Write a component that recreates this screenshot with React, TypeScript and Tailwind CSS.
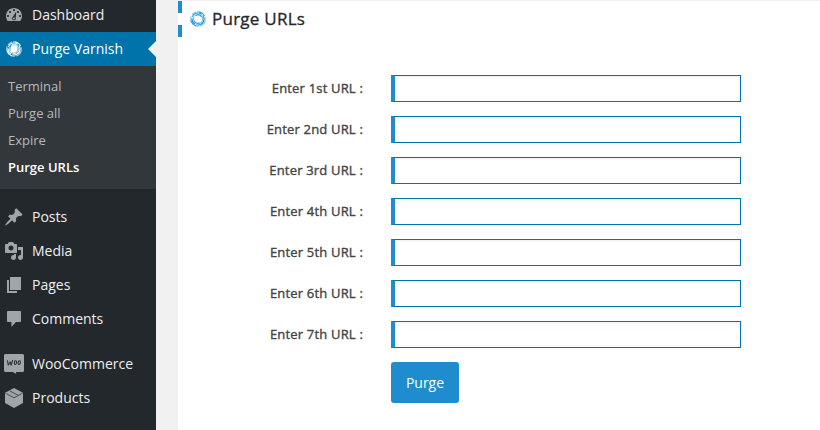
import type { ReactNode } from "react";

function Dash({ d }: { d: string }) {
  return (
    <svg viewBox="0 0 20 20" className="size-5 shrink-0 fill-[#a0a5aa]">
      <path fillRule="evenodd" d={d} />
    </svg>
  );
}

function Swirl({ className, light }: { className: string; light?: boolean }) {
  const main = light ? "#ffffff" : "#2196d6";
  const soft = light ? "#a5d3ee" : "#7cc8ee";
  return (
    <svg viewBox="0 0 16 16" className={className} fill="none">
      <circle cx="8" cy="8" r="7.3" stroke={soft} strokeWidth="1.1" strokeDasharray="9 1.6 5 1" />
      <circle cx="8" cy="8" r="6" stroke={main} strokeWidth="1.2" strokeDasharray="11 1.2 7 1.4" />
      <circle cx="8" cy="8" r="4.7" stroke={soft} strokeWidth="1.2" strokeDasharray="8 1" />
      {light && <circle cx="8" cy="8" r="3.7" fill="#ffffff" />}
      <path d="M4.2 9.6A4.2 4.2 0 0 0 9.6 11.9M5.6 4.6A4.2 4.2 0 0 1 11.9 6.5" stroke={main} strokeWidth="1" />
      <path d="M0.9 9.4A7.2 7.2 0 0 0 6 14.9M9 .9A7.2 7.2 0 0 1 14.6 5.2" stroke={main} strokeWidth="0.9" />
    </svg>
  );
}

const paths = {
  dashboard:
    "M3.76 16h12.48c1.1-1.37 1.76-3.11 1.76-5 0-4.42-3.58-8-8-8s-8 3.58-8 8c0 1.89.66 3.63 1.76 5zM10 4c.55 0 1 .45 1 1s-.45 1-1 1-1-.45-1-1 .45-1 1-1zM6 6c.55 0 1 .45 1 1s-.45 1-1 1-1-.45-1-1 .45-1 1-1zm8 0c.55 0 1 .45 1 1s-.45 1-1 1-1-.45-1-1 .45-1 1-1zM8.7 12L12.3 6.4 11.6 12.6c.2.3.3.6.3.9 0 1-.8 1.8-1.9 1.8s-1.9-.8-1.9-1.8c0-.6.2-1.1.6-1.5zM4 10c.55 0 1 .45 1 1s-.45 1-1 1-1-.45-1-1 .45-1 1-1zm12 0c.55 0 1 .45 1 1s-.45 1-1 1-1-.45-1-1 .45-1 1-1zm-5 3.5c0-.55-.45-1-1-1s-1 .45-1 1 .45 1 1 1 1-.45 1-1z",
  posts:
    "M10.44 3.02l1.82-1.82 6.36 6.35-1.83 1.82c-1.05-.68-2.48-.57-3.41.36l-.75.75c-.92.93-1.04 2.35-.35 3.41l-1.83 1.82-2.41-2.41-2.8 2.79c-.42.42-3.38 2.71-3.8 2.29s1.86-3.39 2.28-3.81l2.79-2.79L4.1 9.36l1.83-1.82c1.05.69 2.48.57 3.4-.36l.75-.75c.93-.92 1.05-2.35.36-3.41z",
  media:
    "M13 11V4c0-.55-.45-1-1-1h-1.67L9 1H5L3.67 3H2c-.55 0-1 .45-1 1v7c0 .55.45 1 1 1h10c.55 0 1-.45 1-1zM7 4.5c1.38 0 2.5 1.12 2.5 2.5S8.38 9.5 7 9.5 4.5 8.38 4.5 7 5.62 4.5 7 4.5zM14 6h5v10.5c0 1.38-1.12 2.5-2.5 2.5S14 17.88 14 16.5s1.12-2.5 2.5-2.5c.17 0 .34.02.5.05V9h-3V6zm-4 8.05V13h2v3.5c0 1.38-1.12 2.5-2.5 2.5S7 17.88 7 16.5 8.12 14 9.5 14c.17 0 .34.02.5.05z",
  pages: "M6 15V2h11v13H6zm-1 1h8v2H3V5h2v11z",
  comments:
    "M4 2h12c.55 0 1 .45 1 1v9c0 .55-.45 1-1 1h-4l-4.6 5V13H4c-.55 0-1-.45-1-1V3c0-.55.45-1 1-1z",
};

function WooIcon() {
  return (
    <svg viewBox="0 0 20 20" className="size-5 shrink-0">
      <path
        d="M1.5 0h17A1.5 1.5 0 0 1 20 1.5v15a1.5 1.5 0 0 1-1.5 1.5h-6.600l.4 1.900L8.800 18H1.500A1.500 1.500 0 0 1 0 16.500v-15A1.500 1.500 0 0 1 1.500 0z"
        fill="#a0a5aa"
      />
      <g fill="none" stroke="#23282d" strokeWidth="1" strokeLinecap="round" strokeLinejoin="round">
        <path d="M3.500 6.700l.8 4.600 1.900-3.600.9 3.600 1.500-5" />
        <ellipse cx="11.400" cy="8.700" rx="1.100" ry="1.900" transform="rotate(12 11.4 8.7)" />
        <ellipse cx="15.200" cy="8.700" rx="1.100" ry="1.900" transform="rotate(12 15.2 8.7)" />
      </g>
    </svg>
  );
}

function BoxIcon() {
  return (
    <svg viewBox="0 0 20 20" className="size-5 shrink-0">
      <path d="M10 0l9 4.700v10.400L10 20l-9-4.900V4.700z" fill="#a0a5aa" />
      <path d="M1.500 5.200L10 9.800l8.500-4.600M5.800 2.900l8.500 4.500" fill="none" stroke="#23282d" strokeWidth="0.7" />
    </svg>
  );
}

function MenuItem({ icon, label }: { icon: ReactNode; label: string }) {
  return (
    <li className="flex h-[34px] shrink-0 items-center gap-2 pl-1">
      {icon}
      <span>{label}</span>
    </li>
  );
}

const ordinals = ["1st", "2nd", "3rd", "4th", "5th", "6th", "7th"];

export default function App() {
  return (
    <div className="flex h-[430px] w-[820px] overflow-hidden bg-[#f1f1f1] font-['Open_Sans','Noto_Sans',sans-serif]">
      <nav className="w-[156px] shrink-0 bg-[#23282d] text-sm leading-[18px] text-[#eeeeee]">
        <ul className="-mt-0.5 flex flex-col">
          <MenuItem icon={<Dash d={paths.dashboard} />} label="Dashboard" />
          <li className="flex h-[34px] items-center justify-between bg-[#0073aa] text-white">
            <div className="flex items-center gap-2 pl-1">
              <span className="flex size-5 items-center justify-center">
                <Swirl className="size-4" light />
              </span>
              <span>Purge Varnish</span>
            </div>
            <span className="size-0 border-y-8 border-r-8 border-y-transparent border-r-[#f1f1f1]" />
          </li>
        </ul>
        <ul className="h-[123px] bg-[#32373c] pt-[7px] pl-2 text-[13px] leading-[27px] text-[#b4b9be]">
          <li>Terminal</li>
          <li>Purge all</li>
          <li>Expire</li>
          <li className="font-semibold text-white">Purge URLs</li>
        </ul>
        <ul className="mt-[11px]">
          <MenuItem icon={<Dash d={paths.posts} />} label="Posts" />
          <MenuItem icon={<Dash d={paths.media} />} label="Media" />
          <MenuItem icon={<Dash d={paths.pages} />} label="Pages" />
          <MenuItem icon={<Dash d={paths.comments} />} label="Comments" />
        </ul>
        <ul className="mt-[11px]">
          <MenuItem icon={<WooIcon />} label="WooCommerce" />
          <MenuItem icon={<BoxIcon />} label="Products" />
        </ul>
      </nav>
      <main className="mt-px ml-[22px] flex-1 bg-white">
        <header className="flex h-9 items-center">
          <div className="flex h-full w-1 flex-col justify-between">
            <span className="h-3 bg-[#1e8cce]" />
            <span className="h-3 bg-[#1e8cce]" />
          </div>
          <Swirl className="ml-2 size-4" />
          <h1 className="ml-1.5 text-[17px] leading-6 tracking-[0.25px] text-[#23282d] [-webkit-text-stroke:0.3px_#23282d]">
            Purge URLs
          </h1>
        </header>
        <form className="mt-[38px] flex flex-col gap-3.5">
          {ordinals.map((n) => (
            <label key={n} className="flex h-[27px] items-center">
              <span className="w-[185px] pb-0.5 text-right text-[13px] leading-[18px] tracking-[0.18px] text-[#444444] [-webkit-text-stroke:0.35px_#444444]">
                Enter {n} URL :
              </span>
              <input
                type="text"
                className="ml-7 h-[27px] w-[350px] border border-l-4 border-[#0073aa] border-l-[#1e8cce] bg-white px-1 shadow-[inset_0_1px_2px_rgba(0,0,0,0.07)] outline-none"
              />
            </label>
          ))}
          <button
            type="button"
            className="ml-[213px] h-[41px] w-[68px] rounded-[3px] bg-[#1e8cce] text-sm text-white"
          >
            Purge
          </button>
        </form>
      </main>
    </div>
  );
}
